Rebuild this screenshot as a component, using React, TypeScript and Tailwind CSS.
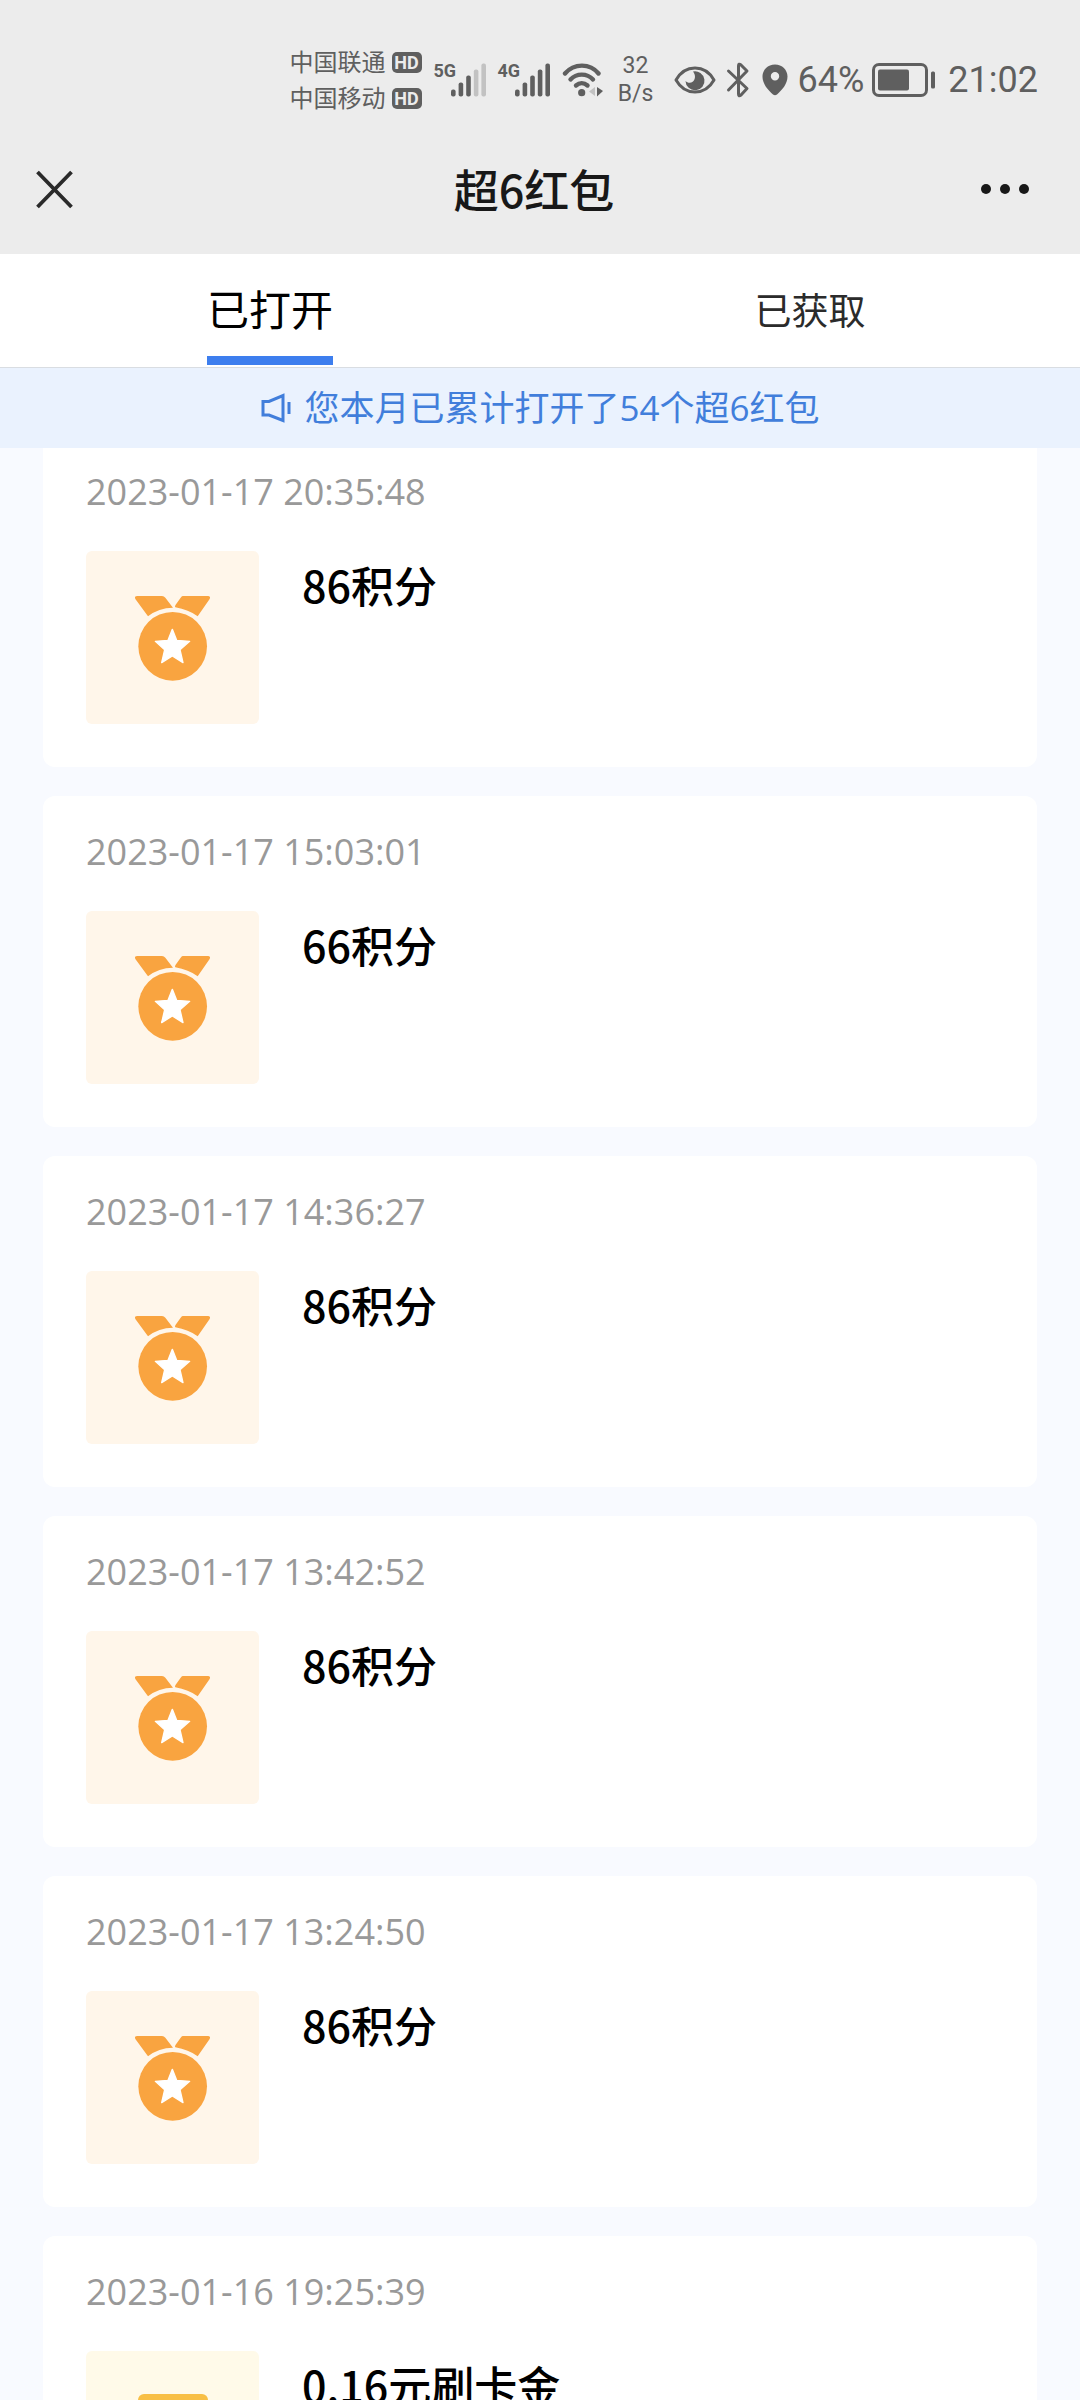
import { useState } from 'react'
import type { ReactNode } from 'react'

type RewardKind = 'points' | 'cash'

interface RewardRecord {
  time: string
  title: string
  kind: RewardKind
}

const records: RewardRecord[] = [
  { time: '2023-01-17 20:35:48', title: '86积分', kind: 'points' },
  { time: '2023-01-17 15:03:01', title: '66积分', kind: 'points' },
  { time: '2023-01-17 14:36:27', title: '86积分', kind: 'points' },
  { time: '2023-01-17 13:42:52', title: '86积分', kind: 'points' },
  { time: '2023-01-17 13:24:50', title: '86积分', kind: 'points' },
  { time: '2023-01-16 19:25:39', title: '0.16元刷卡金', kind: 'cash' },
]

const tabs = ['已打开', '已获取']

function Carrier({ name }: { name: string }) {
  return (
    <div className="flex items-center gap-1.5">
      <span className="text-[24px] leading-9">{name}</span>
      <span className="w-[30px] h-[21px] rounded-[5px] bg-[#5f5f5f] text-[#ececec] text-[18px] leading-[21px] font-bold text-center font-['Roboto',sans-serif]">
        HD
      </span>
    </div>
  )
}

function Signal({ label, strength }: { label: string; strength: number }) {
  const heights = [7, 14, 21, 27, 33]

  return (
    <div className="flex items-start">
      <span className="w-[17px] text-[18px] leading-4 font-bold font-['Liberation_Sans_Narrow','Roboto',sans-serif]">
        {label}
      </span>
      <svg width="35" height="34" viewBox="0 0 35 34" className="shrink-0" aria-hidden="true">
        {heights.map((h, i) => (
          <rect
            key={h}
            x={i * 7.6}
            y={33.5 - h}
            width="4.6"
            height={h}
            rx="2"
            fill={i < strength ? '#5f5f5f' : '#c2c2c2'}
          />
        ))}
      </svg>
    </div>
  )
}

function WifiIcon() {
  return (
    <svg width="42" height="36" viewBox="0 0 42 36" fill="none" aria-hidden="true">
      <g stroke="#5f5f5f" strokeWidth="4.4" strokeLinecap="round">
        <path d="M3 11.5C12 1 28 1 36.500 11.500" />
        <path d="M8.500 17.500C14.500 11 25 11 31 17.500" />
        <path d="M14 23.500C17.500 20.500 22 20.500 25.500 23.500" />
      </g>
      <circle cx="19.700" cy="30.700" r="3.600" fill="#5f5f5f" />
      <path d="M33 25v9l-6-4.500z" fill="#c2c2c2" />
      <path d="M35 25l6 4-6 5.500z" fill="#5f5f5f" />
    </svg>
  )
}

function EyeIcon() {
  return (
    <svg width="42" height="30" viewBox="0 0 42 30" fill="none" aria-hidden="true">
      <path d="M2 15C11 -1 31 -1 40 15C31 31 11 31 2 15Z" stroke="#5f5f5f" strokeWidth="3" strokeLinejoin="round" />
      <path d="M19 6.500a9.500 9.500 0 1 1 -7.500 9.500c2 2 5 2.500 7.500 .5c2.800-2.500 2.500-7 0-10z" fill="#5f5f5f" />
    </svg>
  )
}

function BluetoothIcon() {
  return (
    <svg width="24" height="38" viewBox="0 0 24 38" fill="none" aria-hidden="true">
      <path
        d="M2.500 10L21 27.500L15 34Q12.500 36 12.500 33V5Q12.500 2 15 4L21 10L2.500 29"
        stroke="#5f5f5f"
        strokeWidth="3"
        strokeLinecap="round"
        strokeLinejoin="round"
      />
    </svg>
  )
}

function PinIcon() {
  return (
    <svg width="26" height="32" viewBox="0 0 26 32" aria-hidden="true">
      <path
        d="M13 0.500C5.800 .5 .5 6 .5 12.500C.5 20 6 26 11 30.500Q13 32 15 30.500C20 26 25.500 20 25.500 12.500C25.500 6 20.200 .5 13 .5ZM13 8a4.200 4.200 0 1 1 0 8.400a4.200 4.200 0 0 1 0-8.400Z"
        fill="#5f5f5f"
        fillRule="evenodd"
      />
    </svg>
  )
}

function BatteryIcon() {
  return (
    <svg width="64" height="34" viewBox="0 0 64 34" fill="none" aria-hidden="true">
      <rect x="1.500" y="1.500" width="53" height="31" rx="5.500" stroke="#5f5f5f" strokeWidth="3" />
      <rect x="6" y="6.500" width="31" height="21" rx="2" fill="#5f5f5f" />
      <rect x="59" y="8.500" width="4" height="17" rx="1.500" fill="#5f5f5f" />
    </svg>
  )
}

function StatusBar() {
  return (
    <div className="flex items-center justify-end h-[124px] pt-9 pr-[42px] text-[#5f5f5f]">
      <div className="mr-3">
        <Carrier name="中国联通" />
        <Carrier name="中国移动" />
      </div>
      <div className="flex items-center gap-3 mr-3">
        <Signal label="5G" strength={3} />
        <Signal label="4G" strength={5} />
      </div>
      <WifiIcon />
      <div className="w-12 ml-2 mr-3.5 text-center text-[23px] leading-7 font-['Roboto',sans-serif]">
        <div>32</div>
        <div>B/s</div>
      </div>
      <EyeIcon />
      <div className="ml-2.5 mr-3">
        <BluetoothIcon />
      </div>
      <PinIcon />
      <span className="ml-2.5 mr-2 text-[36px] leading-10 font-['Roboto',sans-serif]">64%</span>
      <BatteryIcon />
      <span className="ml-3 text-[36px] leading-10 font-['Roboto',sans-serif]">21:02</span>
    </div>
  )
}

function TitleBar() {
  return (
    <div className="grid grid-cols-[120px_1fr_132px] items-center h-[130px]">
      <button type="button" aria-label="关闭" className="flex pl-[34px]">
        <svg width="41" height="41" viewBox="0 0 41 41" aria-hidden="true">
          <path d="M3.500 3L37.500 38M37.500 3L3.500 38" stroke="#2a2a2a" strokeWidth="3.800" />
        </svg>
      </button>
      <h1 className="text-center text-[45px] leading-[60px] font-medium text-[#181818] font-['Noto_Sans_CJK_SC',sans-serif]">
        超6红包
      </h1>
      <button type="button" aria-label="更多" className="flex justify-end pr-[50px]">
        <svg width="50" height="10" viewBox="0 0 50 10" fill="#181818" aria-hidden="true">
          <circle cx="6" cy="5" r="5" />
          <circle cx="25" cy="5" r="5" />
          <circle cx="44" cy="5" r="5" />
        </svg>
      </button>
    </div>
  )
}

function MedalIcon() {
  return (
    <svg width="110" height="110" viewBox="-6 8 330 330" aria-hidden="true">
      <g fill="#f9a440">
        <path d="M52 47H126Q132 47 136 52L159 82Q116 82 84 108L46 56Q42 47 52 47Z" />
        <path d="M188 47H264Q273 48 269 56L233 108Q206 88 166 81Q163 78 167 73L182 52Q185 47 188 47Z" />
        <circle cx="158" cy="198" r="103" />
      </g>
      <path
        d="M157 147L170 180L209 183L180 208L189 247L157 227L125 247L134 208L106 183L144 180Z"
        fill="#fff"
        stroke="#fff"
        strokeWidth="4"
        strokeLinejoin="round"
      />
    </svg>
  )
}

function CashIcon() {
  return (
    <svg width="88" height="88" viewBox="0 0 88 88" aria-hidden="true">
      <rect x="9" y="0" width="70" height="88" rx="6" fill="#f8bf45" />
      <path d="M30 24L44 42L58 24M44 42V68M30 46H58M30 56H58" stroke="#fff" strokeWidth="5" fill="none" />
    </svg>
  )
}

function Thumb({ kind }: { kind: RewardKind }) {
  const icons: Record<RewardKind, ReactNode> = {
    points: <MedalIcon />,
    cash: <CashIcon />,
  }

  return (
    <div
      className={`w-[173px] h-[173px] shrink-0 rounded-md flex items-center justify-center ${
        kind === 'points' ? 'bg-[#fff6ea]' : 'bg-[#fffae9]'
      }`}
    >
      {icons[kind]}
    </div>
  )
}

function RewardCard({ record }: { record: RewardRecord }) {
  return (
    <li className="bg-white rounded-xl px-[43px] pt-8 pb-[43px]">
      <time className="block text-[36px] leading-[48px] text-[#999999]">{record.time}</time>
      <div className="flex gap-[43px] mt-[35px]">
        <Thumb kind={record.kind} />
        <h2 className="text-[43px] leading-[66px] font-medium text-black font-['Noto_Sans_CJK_SC',sans-serif]">
          {record.title}
        </h2>
      </div>
    </li>
  )
}

export default function App() {
  const [activeTab, setActiveTab] = useState(0)

  return (
    <div className="flex flex-col h-screen overflow-hidden bg-[#f8faff] font-['Open_Sans','Noto_Sans_CJK_SC',sans-serif]">
      <header className="bg-[#ececec]">
        <StatusBar />
        <TitleBar />
      </header>

      <nav className="grid grid-cols-2 h-[114px] bg-white border-b border-[#d9dde2]">
        {tabs.map((tab, i) => (
          <button
            key={tab}
            type="button"
            onClick={() => setActiveTab(i)}
            className="flex flex-col items-center"
          >
            <span
              className={`flex items-center h-[111px] border-b-[9px] ${
                activeTab === i
                  ? 'pt-2 text-[42px] text-black border-[#3d7eee]'
                  : 'pt-3 text-[37px] text-[#2b2b2b] border-transparent'
              }`}
            >
              {tab}
            </span>
          </button>
        ))}
      </nav>

      <div className="relative z-10 shrink-0 flex items-center justify-center gap-3 h-20 bg-[#eaf2fe] text-[#417edb]">
        <svg width="32" height="32" viewBox="0 0 32 32" fill="none" stroke="currentColor" strokeWidth="3" aria-hidden="true">
          <path d="M3 9.500H9L23 3.500V28.500L9 23H3Z" />
          <path d="M29 10V22" />
        </svg>
        <p className="text-[35px] leading-[48px]">您本月已累计打开了54个超6红包</p>
      </div>

      <main className="flex-1 min-h-0 -mt-3 px-[43px] overflow-y-auto [scrollbar-width:none]">
        <ul className="flex flex-col gap-[29px]">
          {records.map((record) => (
            <RewardCard key={record.time} record={record} />
          ))}
        </ul>
      </main>
    </div>
  )
}
